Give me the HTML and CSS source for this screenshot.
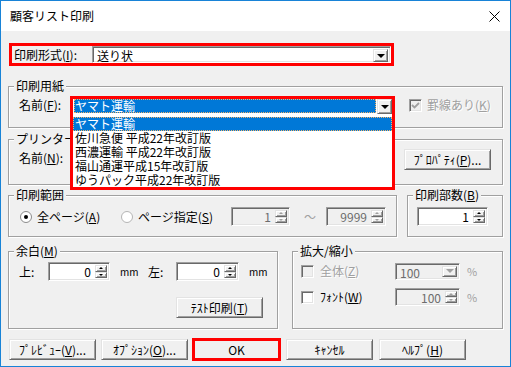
FILE: index.html
```html
<!DOCTYPE html>
<html lang="ja">

<head>
  <meta charset="UTF-8" />
  <title>顧客リスト印刷</title>
  <link rel="stylesheet" href="styles.css">
</head>

<body>
  <div class="window">
    <div class="titlebar">
      <span class="title">顧客リスト印刷</span>
      <svg class="close" width="11" height="11" viewBox="0 0 11 11"><path d="M0.5 0.5l10 10M10.5 0.5l-10 10" stroke="#000" stroke-width="1" fill="none" /></svg>
    </div>

    <div class="dialog">
      <!-- 印刷形式 -->
      <div class="format-row">
        <span class="format-label">印刷形式(<u>I</u>):</span>
        <div class="combo sunken format-combo">
          <span class="combo-text">送り状</span>
          <span class="drop-btn raised"><i class="arrow-down"></i></span>
        </div>
      </div>

      <!-- 印刷用紙 -->
      <div class="group paper">
        <div class="group-title">印刷用紙</div>
        <div class="paper-row">
          <span class="field-label">名前(<u>F</u>):</span>
          <div class="dropdown">
            <div class="dropdown-field">
              <span class="dropdown-value">ヤマト運輸</span>
              <span class="drop-btn raised"><i class="arrow-down"></i></span>
            </div>
            <ul class="dropdown-list">
              <li class="selected">ヤマト運輸</li>
              <li>佐川急便 平成22年改訂版</li>
              <li>西濃運輸 平成22年改訂版</li>
              <li>福山通運平成15年改訂版</li>
              <li>ゆうパック平成22年改訂版</li>
            </ul>
          </div>
          <span class="check ruled disabled">
            <span class="checkbox sunken"><svg width="9" height="9" viewBox="0 0 9 9"><path d="M1 4l2.5 2.5L8 2" stroke="#a0a0a0" stroke-width="1.8" fill="none" /></svg></span>
            <span>罫線あり(<u>K</u>)</span>
          </span>
        </div>
      </div>

      <!-- プリンター -->
      <div class="group printer">
        <div class="group-title">プリンター</div>
        <div class="printer-row">
          <span class="field-label printer-label">名前(<u>N</u>):</span>
          <span class="btn raised">ﾌﾟﾛﾊﾟﾃｨ(<u>P</u>)...</span>
        </div>
      </div>

      <div class="row range-row">
        <!-- 印刷範囲 -->
        <div class="group range">
          <div class="group-title">印刷範囲</div>
          <div class="range-line">
            <span class="option opt-all">
              <svg class="radio" width="12" height="12" viewBox="0 0 12 12"><circle cx="6" cy="6" r="5.5" fill="#fff" stroke="#8a8a8a" /><circle cx="6" cy="6" r="2" fill="#000" /></svg>
              <span>全ページ(<u>A</u>)</span>
            </span>
            <span class="option opt-page">
              <svg class="radio" width="12" height="12" viewBox="0 0 12 12"><circle cx="6" cy="6" r="5.5" fill="#fff" stroke="#b4b4b4" /></svg>
              <span>ページ指定(<u>S</u>)</span>
            </span>
            <div class="spin sunken disabled page-from">
              <span class="spin-value">1</span>
              <span class="spinner"><span class="raised"><i class="arrow-up"></i></span><span class="raised"><i class="arrow-dn"></i></span></span>
            </div>
            <span class="tilde">～</span>
            <div class="spin sunken disabled page-to">
              <span class="spin-value">9999</span>
              <span class="spinner"><span class="raised"><i class="arrow-up"></i></span><span class="raised"><i class="arrow-dn"></i></span></span>
            </div>
          </div>
        </div>

        <!-- 印刷部数 -->
        <div class="group copies">
          <div class="group-title">印刷部数(<u>B</u>)</div>
          <div class="spin sunken copies-spin">
            <span class="spin-value">1</span>
            <span class="spinner"><span class="raised"><i class="arrow-up"></i></span><span class="raised"><i class="arrow-dn"></i></span></span>
          </div>
        </div>
      </div>

      <div class="row bottom-row">
        <!-- 余白 -->
        <div class="group margins">
          <div class="group-title">余白(<u>M</u>)</div>
          <div class="margin-grid">
            <span>上:</span>
            <div class="spin sunken">
              <span class="spin-value">0</span>
              <span class="spinner"><span class="raised"><i class="arrow-up"></i></span><span class="raised"><i class="arrow-dn"></i></span></span>
            </div>
            <span class="unit">mm</span>
            <span>左:</span>
            <div class="spin sunken">
              <span class="spin-value">0</span>
              <span class="spinner"><span class="raised"><i class="arrow-up"></i></span><span class="raised"><i class="arrow-dn"></i></span></span>
            </div>
            <span class="unit">mm</span>
            <span class="btn raised test-btn">ﾃｽﾄ印刷(<u>T</u>)</span>
          </div>
        </div>

        <!-- 拡大/縮小 -->
        <div class="group zoom">
          <div class="group-title">拡大/縮小</div>
          <div class="zoom-grid">
            <span class="check disabled">
              <span class="checkbox sunken"></span>
              <span>全体(<u>Z</u>)</span>
            </span>
            <div class="combo sunken disabled zoom-combo">
              <span class="combo-text">100</span>
              <span class="drop-btn raised"><i class="arrow-down"></i></span>
            </div>
            <span class="percent">%</span>
            <span class="check">
              <span class="checkbox sunken"></span>
              <span>ﾌｫﾝﾄ(<u>W</u>)</span>
            </span>
            <div class="spin sunken disabled zoom-spin">
              <span class="spin-value">100</span>
              <span class="spinner"><span class="raised"><i class="arrow-up"></i></span><span class="raised"><i class="arrow-dn"></i></span></span>
            </div>
            <span class="percent">%</span>
          </div>
        </div>
      </div>

      <div class="buttons">
        <span class="btn raised">ﾌﾟﾚﾋﾞｭｰ(<u>V</u>)...</span>
        <span class="btn raised">ｵﾌﾟｼｮﾝ(<u>O</u>)...</span>
        <span class="btn raised ok">OK</span>
        <span class="btn raised">ｷｬﾝｾﾙ</span>
        <span class="btn raised">ﾍﾙﾌﾟ(<u>H</u>)</span>
      </div>
    </div>
  </div>
</body>

</html>
```

FILE: styles.css
```css
* {
  box-sizing: border-box;
}

body {
  margin: 0;
  background: #fff;
  color: #000;
  font-family: "Noto Sans CJK JP", "Noto Sans", sans-serif;
  font-size: 12px;
  line-height: 14px;
}

u {
  text-underline-offset: 1px;
}

.window {
  width: 511px;
  height: 367px;
  border: 1px solid #1883d7;
  background: #f0f0f0;
  display: flex;
  flex-direction: column;
}

.titlebar {
  height: 30px;
  flex: none;
  background: #fff;
  display: flex;
  align-items: center;
  justify-content: space-between;
  padding: 0 10px 0 9px;
}

.dialog {
  flex: 1;
  padding: 12px 7px 0;
  display: flex;
  flex-direction: column;
}

/* 3D borders */
.sunken {
  border: 1px solid;
  border-color: #a0a0a0 #fff #fff #a0a0a0;
  box-shadow: inset 1px 1px 0 #696969, inset -1px -1px 0 #e3e3e3;
}

.raised {
  background: #f0f0f0;
  border: 1px solid;
  border-color: #e3e3e3 #696969 #696969 #e3e3e3;
  box-shadow: inset 1px 1px 0 #fff, inset -1px -1px 0 #a0a0a0;
}

.arrow-down {
  display: block;
  border-left: 4px solid transparent;
  border-right: 4px solid transparent;
  border-top: 4px solid #000;
}

.arrow-up,
.arrow-dn {
  display: block;
  border-left: 2px solid transparent;
  border-right: 2px solid transparent;
}

.arrow-up {
  border-bottom: 2px solid #000;
}

.arrow-dn {
  border-top: 2px solid #000;
}

/* groups */
.group {
  border: 1px solid #a0a0a0;
  box-shadow: inset 1px 1px 0 #fff, 1px 1px 0 #fff;
}

.group-title {
  width: fit-content;
  margin: -8px 0 0 5px;
  padding: 0 2px;
  background: #f0f0f0;
  line-height: 14px;
}

.row {
  display: flex;
}

/* format row */
.format-row {
  width: 385px;
  height: 23px;
  margin-left: 1px;
  border: 3px solid #f00;
  display: flex;
}

.format-label {
  width: 80px;
  padding-left: 2px;
  line-height: 17px;
}

.combo {
  display: flex;
  background: #fff;
  padding: 2px;
}

.format-combo {
  flex: 1;
  height: 17px;
  padding-bottom: 0;
}

.combo-text {
  flex: 1;
  padding-left: 2px;
  line-height: 13px;
}

.drop-btn {
  width: 15px;
  display: flex;
  align-items: center;
  justify-content: center;
}

/* paper */
.paper {
  margin-top: 20px;
  height: 42px;
}

.paper-row {
  display: flex;
  align-items: center;
  margin-top: 3px;
  padding-left: 10px;
}

.field-label {
  width: 51px;
}

.dropdown {
  position: relative;
  width: 325px;
  border: 3px solid #f00;
  border-bottom: none;
}

.dropdown-field {
  display: flex;
  height: 15px;
  background: #fff;
}

.dropdown-value {
  flex: 1;
  margin: 0 1px 1px 1px;
  padding-left: 1px;
  background: #0078d7;
  color: #fff;
  line-height: 14px;
  outline: 1px dotted #f2b36a;
  outline-offset: -1px;
}

.dropdown-field .drop-btn {
  width: 15px;
}

.dropdown-list {
  position: absolute;
  top: 100%;
  left: -3px;
  right: -3px;
  z-index: 2;
  margin: 0;
  padding: 3px 0 0;
  list-style: none;
  background: #fff;
  border: 3px solid #f00;
  border-top: none;
}

.dropdown-list li {
  height: 14px;
  line-height: 14px;
  padding-left: 2px;
  white-space: nowrap;
}

.dropdown-list .selected {
  background: #0078d7;
  color: #fff;
  outline: 1px dotted #f2b36a;
  outline-offset: -1px;
}

.check {
  display: flex;
  align-items: center;
  gap: 6px;
}

.ruled {
  margin-left: 14px;
  gap: 5px;
}

.checkbox {
  width: 13px;
  height: 13px;
  flex: none;
  background: #fff;
  display: flex;
  align-items: center;
  justify-content: center;
}

.disabled {
  color: #a0a0a0;
  text-shadow: 1px 1px 0 #fff;
}

.disabled .checkbox {
  background: #f0f0f0;
}

/* printer */
.printer {
  margin-top: 11px;
  height: 46px;
}

.printer-row {
  display: flex;
  align-items: center;
  justify-content: space-between;
  margin-top: 3px;
  padding: 0 11px 0 10px;
}

.printer-label {
  margin-bottom: 4px;
}

.btn {
  width: 87px;
  height: 21px;
  display: flex;
  align-items: center;
  justify-content: center;
  white-space: nowrap;
}

/* range & copies */
.range-row {
  margin-top: 10px;
  height: 42px;
  gap: 10px;
}

.range {
  width: 389px;
}

.copies {
  flex: 1;
}

.range-line {
  display: flex;
  align-items: center;
  margin-top: 5px;
  padding-left: 11px;
}

.option {
  display: flex;
  align-items: center;
  gap: 5px;
}

.opt-all {
  width: 101px;
}

.opt-page {
  width: 110px;
}

.radio {
  flex: none;
}

.spin {
  display: flex;
  height: 19px;
  padding: 2px;
  background: #fff;
}

.spin.disabled {
  background: #f0f0f0;
  color: #6d6d6d;
  text-shadow: none;
}

.spin-value {
  flex: 1;
  text-align: right;
  padding-right: 4px;
  line-height: 14px;
}

.spinner {
  width: 12px;
  display: flex;
  flex-direction: column;
}

.spinner span {
  flex: 1;
  display: flex;
  align-items: center;
  justify-content: center;
}

.spin.disabled .arrow-up {
  border-bottom-color: #a0a0a0;
}

.spin.disabled .arrow-dn {
  border-top-color: #a0a0a0;
}

.page-from {
  width: 59px;
}

.tilde {
  width: 36px;
  padding-left: 14px;
  color: #a0a0a0;
}

.page-to {
  width: 60px;
}

.copies-spin {
  width: 71px;
  margin: 5px 0 0 9px;
}

/* margins & zoom */
.bottom-row {
  margin-top: 14px;
  height: 78px;
  gap: 14px;
}

.margins {
  width: 270px;
}

.zoom {
  flex: 1;
}

.margin-grid {
  display: grid;
  grid-template-columns: 29px 62px 38px 28px 63px auto;
  align-items: center;
  row-gap: 16px;
  margin-top: 4px;
  padding-left: 10px;
}

.unit {
  padding-left: 10px;
  font-size: 10px;
}

.test-btn {
  grid-column: 5 / 7;
}

.zoom-grid {
  display: grid;
  grid-template-columns: 94px 65px auto;
  grid-auto-rows: 18px;
  align-items: center;
  row-gap: 8px;
  margin-top: 4px;
  padding-left: 8px;
}

.zoom-combo {
  height: 17px;
  background: #f0f0f0;
  color: #6d6d6d;
  text-shadow: none;
}

.zoom-combo .arrow-down {
  border-top-color: #a0a0a0;
}

.zoom-spin {
  height: 18px;
}

.percent {
  padding-left: 7px;
  color: #a0a0a0;
  font-size: 11px;
}

/* dialog buttons */
.buttons {
  display: flex;
  margin-top: 10px;
  padding-left: 1px;
}

.buttons .btn + .btn {
  margin-left: 5px;
}

.buttons .ok {
  margin-left: 42px;
  outline: 3px solid #f00;
  outline-offset: -2px;
}

.buttons .ok ~ .btn {
  margin-left: 6px;
}
```
